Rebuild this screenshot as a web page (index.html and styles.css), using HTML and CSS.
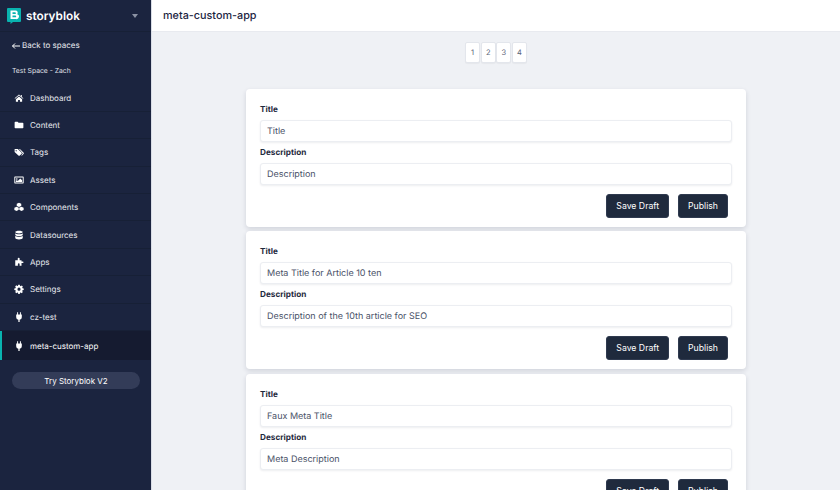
FILE: index.html
```html
<!DOCTYPE html>
<html lang="en">
<head>
<meta charset="utf-8">
<title>meta-custom-app</title>
<link rel="stylesheet" href="styles.css">
</head>
<body>
<div class="app">
  <aside class="sidebar">
    <div class="brand">
      <svg class="logo" viewBox="0 0 14 16" width="14" height="16"><path fill="#09b3af" d="M1 0h12a1 1 0 0 1 1 1v12a1 1 0 0 1-1 1H6l-2.500 2v-2H1a1 1 0 0 1-1-1V1a1 1 0 0 1 1-1z"/><path fill="#fff" d="M3.500 2.500H8.500a2.300 2.300 0 0 1 1.700 3.800A2.400 2.400 0 0 1 8.800 11H3.500zM5.500 4.300v1.700H8a.85.85 0 0 0 0-1.700zM5.500 7.500v1.800h2.800a.9.9 0 0 0 0-1.800z"/></svg>
      <span class="brand-name">storyblok</span>
      <span class="caret"></span>
    </div>
    <a class="back"><svg class="arrow" viewBox="0 0 8 6" width="8" height="6"><path d="M3 .5.500 3 3 5.500M.500 3H8" fill="none" stroke="#fff" stroke-width="1"/></svg>Back to spaces</a>
    <div class="space">Test Space - Zach</div>
    <nav class="nav">
      <a class="item"><svg class="ico" viewBox="0 0 16 16"><path d="M8 2.500 1 8.500l.7.8L8 4l6.300 5.300.7-.8-2.500-2.100V3h-1.700v2L8 2.500zM3 9.800V14h3.500v-3h3v3H13V9.800L8 5.500z"/></svg>Dashboard</a>
      <a class="item"><svg class="ico" viewBox="0 0 16 16"><path d="M1 4a1.200 1.200 0 0 1 1.200-1.200h3.600L7.300 4.500h6.500A1.200 1.200 0 0 1 15 5.700v6.300a1.200 1.200 0 0 1-1.200 1.200H2.200A1.200 1.200 0 0 1 1 12z"/></svg>Content</a>
      <a class="item"><svg class="ico" viewBox="0 0 16 16"><path d="M1 3.200h5.200l6 6a1 1 0 0 1 0 1.400l-3.300 3.200a1 1 0 0 1-1.400 0L1 7.900zM3.500 5a1 1 0 1 0 .01 0zM8 3.200h1.500l6 6a1 1 0 0 1 0 1.400l-3 3.200-.8-.8 2.400-2.700z"/></svg>Tags</a>
      <a class="item"><svg class="ico" viewBox="0 0 16 16"><path fill-rule="evenodd" d="M1.500 2.500h13a1 1 0 0 1 1 1v9a1 1 0 0 1-1 1h-13a1 1 0 0 1-1-1v-9a1 1 0 0 1 1-1zM2 4v8h12V4zM4.500 5a1.300 1.300 0 1 1 0 2.600 1.300 1.300 0 0 1 0-2.600zM3 11V9.500L4.500 8l1.500 1.500L10 5.500l3 3V11z"/></svg>Assets</a>
      <a class="item"><svg class="ico" viewBox="0 0 16 16"><path d="M8 1.200 11.600 2.800V6.400L8 8 4.400 6.400V2.800zM4.200 7.500 7.600 9v3.500L4.200 14.500.6 12.700V9zM11.800 7.500 15.400 9v3.700l-3.600 1.800-3.400-2V9z"/></svg>Components</a>
      <a class="item"><svg class="ico" viewBox="0 0 16 16"><path d="M8 1c3.300 0 6 1 6 2.200S11.300 5.500 8 5.500 2 4.400 2 3.200 4.700 1 8 1zM2 5c1 1 3.500 1.600 6 1.600S13 6 14 5v2.500C14 8.700 11.300 9.700 8 9.700S2 8.700 2 7.500zM2 9.200c1 1 3.500 1.600 6 1.600s5-.6 6-1.600v3.500C14 14 11.300 15 8 15s-6-1-6-2.300z"/></svg>Datasources</a>
      <a class="item"><svg class="ico" viewBox="0 0 16 16"><path d="M6 2.500a1.500 1.500 0 0 1 3 0V5h3v2h2a1.200 1.200 0 0 1 0 2.500h-2V14H9v-2.500a1.400 1.400 0 0 0-2.800 0V14H2V5h4z"/></svg>Apps</a>
      <a class="item"><svg class="ico" viewBox="0 0 16 16"><path fill-rule="evenodd" d="M6.800 1h2.400l.4 1.900 1.100.5 1.700-1 1.700 1.700-1 1.700.5 1.100 1.900.4v2.400l-1.900.4-.5 1.100 1 1.700-1.700 1.700-1.700-1-1.100.5-.4 1.900H6.800l-.4-1.900-1.100-.5-1.700 1-1.700-1.700 1-1.700-.5-1.100L.5 9.400V7l1.900-.4.500-1.100-1-1.700 1.700-1.700 1.700 1 1.100-.5zM8 5.700a2.500 2.500 0 1 0 0 5 2.500 2.500 0 0 0 0-5z"/></svg>Settings</a>
      <a class="item"><svg class="ico plug" viewBox="0 0 16 16"><path d="M5 .5h1.500V4h3V.5H11V4h1.500v4.500a4 4 0 0 1-3.500 4V16H7v-3.500a4 4 0 0 1-3.500-4V4H5z"/></svg>cz-test</a>
      <a class="item active"><svg class="ico plug" viewBox="0 0 16 16"><path d="M5 .5h1.500V4h3V.5H11V4h1.500v4.500a4 4 0 0 1-3.500 4V16H7v-3.500a4 4 0 0 1-3.500-4V4H5z"/></svg>meta-custom-app</a>
    </nav>
    <button class="try">Try Storyblok V2</button>
  </aside>
  <div class="main">
    <header class="topbar">meta-custom-app</header>
    <div class="content">
      <div class="pager">
        <a class="page">1</a><a class="page">2</a><a class="page">3</a><a class="page">4</a>
      </div>
      <section class="card">
        <label class="lbl">Title</label>
        <div class="input">Title</div>
        <label class="lbl">Description</label>
        <div class="input">Description</div>
        <div class="actions"><button class="btn">Save Draft</button><button class="btn">Publish</button></div>
      </section>
      <section class="card">
        <label class="lbl">Title</label>
        <div class="input">Meta Title for Article 10 ten</div>
        <label class="lbl">Description</label>
        <div class="input">Description of the 10th article for SEO</div>
        <div class="actions"><button class="btn">Save Draft</button><button class="btn">Publish</button></div>
      </section>
      <section class="card">
        <label class="lbl">Title</label>
        <div class="input">Faux Meta Title</div>
        <label class="lbl">Description</label>
        <div class="input">Meta Description</div>
        <div class="actions"><button class="btn">Save Draft</button><button class="btn">Publish</button></div>
      </section>
    </div>
  </div>
</div>
</body>
</html>
```
FILE: styles.css
```css
* { box-sizing: border-box; }
html, body { margin: 0; height: 100%; overflow: hidden; }
body { font-family: Inter, "Liberation Sans", sans-serif; color: #1b243f; background: #eff1f5; text-rendering: geometricPrecision; }
.app { display: flex; height: 490px; overflow: hidden; }

.sidebar { width: 152px; flex: none; background: #1b243f; color: #fff; border-right: 1px solid #d9dde6; }
.brand { height: 32px; display: flex; align-items: center; padding: 0 12px 0 7px; border-bottom: 1px solid #172036; }
.logo { margin-right: 5px; flex: none; }
.brand-name { font-size: 11.800px; font-weight: 600; flex: 1; }
.caret { width: 0; height: 0; border-left: 3.500px solid transparent; border-right: 3.500px solid transparent; border-top: 4px solid #8b92a4; margin-right: 1px; }
.back { display: flex; align-items: center; gap: 2px; margin-top: 7px; padding-left: 12px; font-size: 8px; font-weight: 400; line-height: 13px; color: #e8eaef; }
.space { margin-top: 12px; padding-left: 12px; font-size: 6.800px; font-weight: 400; line-height: 13px; color: #e0e3ea; }
.nav { margin-top: 7.500px; }
.item { height: 27.400px; display: flex; align-items: center; padding-left: 13.500px; font-size: 8px; font-weight: 400; color: #e8eaef; border-bottom: 1px solid #172036; }
.ico { width: 10px; height: 10px; fill: #fff; margin-right: 6.500px; flex: none; }
.plug { height: 12px; }
.active { height: 29px; background: #151b30; border-left: 2px solid #09b3af; padding-left: 11.500px; border-bottom: 0; color: #fff; }
.try { display: block; width: 128px; height: 17px; margin: 12px 0 0 12px; padding: 0; border: 0; border-radius: 9px; background: #333c58; color: #fff; font: 400 8px Inter, "Liberation Sans", sans-serif; }

.main { flex: 1; min-width: 0; display: flex; flex-direction: column; }
.topbar { height: 32px; flex: none; background: #fff; border-bottom: 1px solid #e8eaef; padding-left: 11px; font-size: 10.800px; line-height: 32px; font-weight: 500; color: #1b243f; }
.content { flex: 1; display: flex; flex-direction: column; align-items: center; padding-top: 10px; }
.pager { display: flex; height: 21px; gap: 0.800px; margin-bottom: 26px; }
.page { width: 14.800px; background: #fff; border: 1px solid #e3e6ec; border-radius: 2px; font-size: 7.500px; line-height: 19px; text-align: center; color: #5b6478; box-shadow: 0 1px 1px rgba(0,0,0,.04); }
.card { width: 500px; flex: none; height: 138px; margin-bottom: 4.300px; padding: 14px 14px 0; background: #fff; border-radius: 4px; box-shadow: 0 2px 5px rgba(27,36,63,.14); }
.lbl { display: block; font-size: 8.200px; line-height: 12px; font-weight: 700; color: #1f2a3d; }
.input { height: 22px; margin: 5px 0 4px; padding-left: 6px; font-size: 9px; line-height: 21px; color: #4a5268; background: #fff; border: 1px solid #eceef2; border-radius: 3px; box-shadow: 0 1px 2px rgba(27,36,63,.08); }
.actions { display: flex; justify-content: flex-end; gap: 9px; margin: 9px 4px 0 0; }
.btn { height: 24px; padding: 0 9px; border: 1px solid #2f3a4f; border-radius: 3px; background: #1f2a3d; color: #fff; font: 400 8.700px Inter, "Liberation Sans", sans-serif; }
```
